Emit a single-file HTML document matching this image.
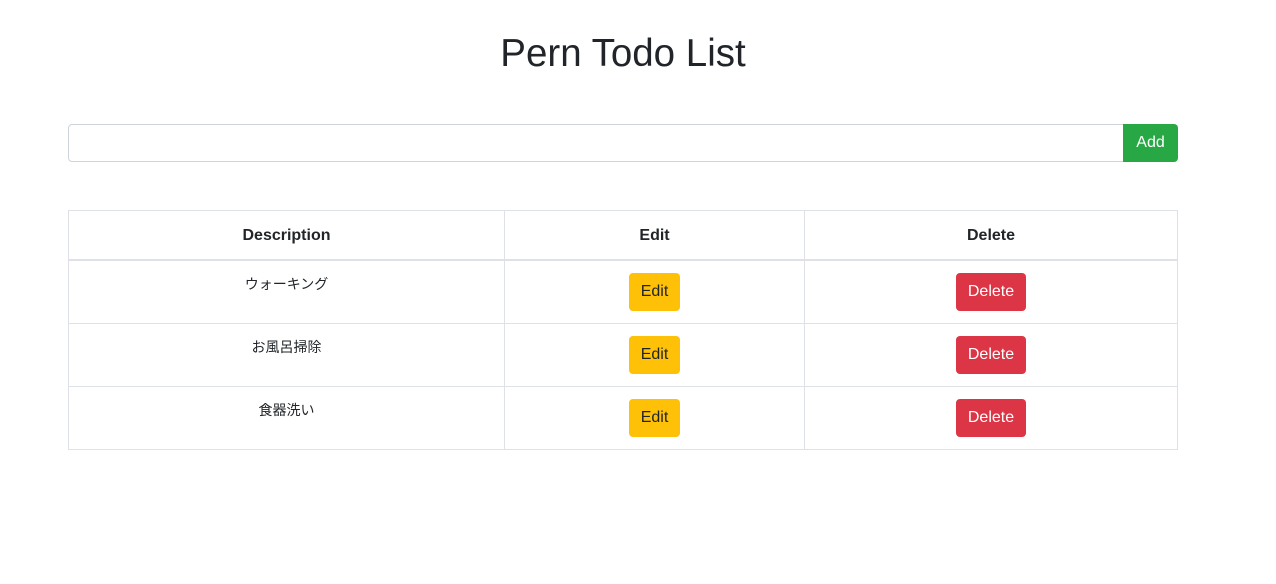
<!DOCTYPE html>
<html><head><meta charset="utf-8"><style>
*{box-sizing:border-box}
body{margin:0;font-family:"Liberation Sans","Noto Sans CJK JP",sans-serif;color:#212529;font-size:16px;background:#fff;width:1276px;height:584px;overflow:hidden}
h1{margin:0;position:absolute;top:30px;left:0;width:1246px;text-align:center;font-size:38.5px;font-weight:400;line-height:48px}
.inp{position:absolute;left:68px;top:124px;width:1056px;height:38px;border:1px solid #ced4da;border-radius:4px 0 0 4px}
.btn{display:inline-block;height:38px;line-height:38px;padding:0 12px;border-radius:4px;font-size:16px;text-align:center}
.add{position:absolute;left:1123px;top:124px;width:55px;background:#28a745;color:#fff;border-radius:0 4px 4px 0}
table{position:absolute;left:68px;top:210px;width:1110px;border-collapse:collapse}
td,th{border:1px solid #dee2e6;padding:12px;text-align:center;vertical-align:top}
th{height:48px;border-bottom:2px solid #dee2e6;font-weight:700;line-height:24px;padding-top:13px;padding-bottom:11px}
td{height:63px;font-size:14px;line-height:24px;padding-top:11px}
td .btn{margin-top:1px}
.e{background:#ffc107;color:#212529}
.d{background:#dc3545;color:#fff}
</style></head><body>
<h1>Pern Todo List</h1>
<div class="inp"></div>
<div class="btn add">Add</div>
<table>
<tr><th style="width:436px">Description</th><th style="width:300px">Edit</th><th>Delete</th></tr>
<tr><td>ウォーキング</td><td><span class="btn e">Edit</span></td><td><span class="btn d">Delete</span></td></tr>
<tr><td>お風呂掃除</td><td><span class="btn e">Edit</span></td><td><span class="btn d">Delete</span></td></tr>
<tr><td>食器洗い</td><td><span class="btn e">Edit</span></td><td><span class="btn d">Delete</span></td></tr>
</table>
</body></html>
